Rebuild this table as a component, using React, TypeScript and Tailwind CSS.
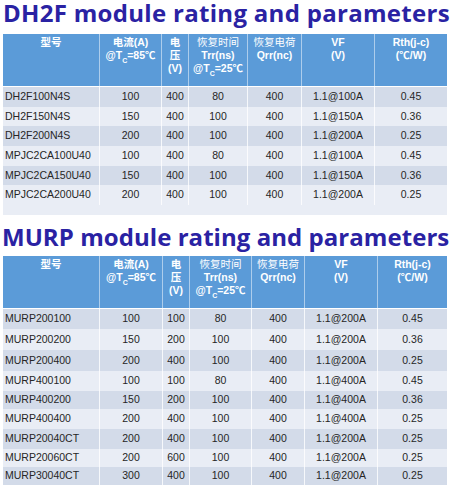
import React from "react";

type Row = { cells: string[]; h: string };

const t1Rows: Row[] = [
  { cells: ["DH2F100N4S", "100", "400", "80", "400", "1.1@100A", "0.45"], h: "h-[20px]" },
  { cells: ["DH2F150N4S", "150", "400", "100", "400", "1.1@150A", "0.36"], h: "h-[19px]" },
  { cells: ["DH2F200N4S", "200", "400", "100", "400", "1.1@200A", "0.25"], h: "h-[20px]" },
  { cells: ["MPJC2CA100U40", "100", "400", "80", "400", "1.1@100A", "0.45"], h: "h-[20px]" },
  { cells: ["MPJC2CA150U40", "150", "400", "100", "400", "1.1@150A", "0.36"], h: "h-[19px]" },
  { cells: ["MPJC2CA200U40", "200", "400", "100", "400", "1.1@200A", "0.25"], h: "h-[30px] pb-[10px]" },
];

const t2Rows: Row[] = [
  { cells: ["MURP200100", "100", "100", "80", "400", "1.1@200A", "0.45"], h: "h-[20px]" },
  { cells: ["MURP200200", "150", "200", "100", "400", "1.1@200A", "0.36"], h: "h-[21px]" },
  { cells: ["MURP200400", "200", "400", "100", "400", "1.1@200A", "0.25"], h: "h-[21px]" },
  { cells: ["MURP400100", "100", "100", "80", "400", "1.1@400A", "0.45"], h: "h-[20px]" },
  { cells: ["MURP400200", "150", "200", "100", "400", "1.1@400A", "0.36"], h: "h-[18px]" },
  { cells: ["MURP400400", "200", "400", "100", "400", "1.1@400A", "0.25"], h: "h-[20px]" },
  { cells: ["MURP20040CT", "200", "400", "100", "400", "1.1@200A", "0.25"], h: "h-[20px]" },
  { cells: ["MURP20060CT", "200", "600", "100", "400", "1.1@200A", "0.25"], h: "h-[18px]" },
  { cells: ["MURP30040CT", "300", "400", "100", "400", "1.1@200A", "0.25"], h: "h-[18px]" },
];

function Tc({ v }: { v: string }) {
  return (
    <span>
      @T<sub className="text-[7px] align-[-2px]">C</sub>={v}℃
    </span>
  );
}

function Header({ cols }: { cols: string }) {
  const cell = "flex flex-col items-center pt-[2px] border-r border-white/50";
  return (
    <div
      className={`grid ${cols} h-[53px] bg-[#5b9bd8] text-white font-bold text-[10.5px] leading-[13px] border-b border-white`}
      style={{ fontFamily: '"Liberation Sans", "Noto Sans CJK SC", sans-serif' }}
    >
      <div className={cell}>型号</div>
      <div className={cell}>
        <span>电流(A)</span>
        <Tc v="85" />
      </div>
      <div className={cell}>
        <span>电</span>
        <span>压</span>
        <span>(V)</span>
      </div>
      <div className={cell}>
        <span className="font-normal">恢复时间</span>
        <span>Trr(ns)</span>
        <Tc v="25" />
      </div>
      <div className={cell}>
        <span className="font-normal">恢复电荷</span>
        <span>Qrr(nc)</span>
      </div>
      <div className={cell}>
        <span>VF</span>
        <span>(V)</span>
      </div>
      <div className="flex flex-col items-center pt-[2px]">
        <span>Rth(j-c)</span>
        <span>(℃/W)</span>
      </div>
    </div>
  );
}

function Table({ cols, rows }: { cols: string; rows: Row[] }) {
  return (
    <div className="ml-[3px] w-[444px]">
      <Header cols={cols} />
      {rows.map((r, i) => (
        <div
          key={i}
          className={`grid ${cols} ${r.h} ${i % 2 === 0 ? "bg-[#d3dbe9]" : "bg-[#e9edf5]"} text-[10.5px] text-[#262626]`}
          style={{ fontFamily: '"Liberation Sans", Arial, sans-serif' }}
        >
          {r.cells.map((c, j) => (
            <div
              key={j}
              className={`flex items-center ${j === 0 ? "justify-start pl-[2px]" : "justify-center"} ${j < 6 ? "border-r border-white/80" : ""}`}
            >
              {c}
            </div>
          ))}
        </div>
      ))}
    </div>
  );
}

export default function App() {
  const titleFont = { fontFamily: '"Open Sans", "Noto Sans", sans-serif' };
  return (
    <div className="w-[454px] h-[488px] bg-white overflow-hidden">
      <div
        className="h-[34px] pl-[3px] text-[24px] leading-[26px] font-bold text-[#2a22a3] whitespace-nowrap tracking-[0.3px]"
        style={titleFont}
      >
        DH2F module rating and parameters
      </div>
      <Table cols="grid-cols-[97px_62px_27px_59px_54px_73px_72px]" rows={t1Rows} />
      <div
        className="mt-[9px] mb-[6px] pl-[2px] text-[24px] leading-[26px] font-bold text-[#2a22a3] whitespace-nowrap tracking-[0.05px]"
        style={titleFont}
      >
        MURP module rating and parameters
      </div>
      <Table cols="grid-cols-[97px_63px_27px_62px_53px_73px_69px]" rows={t2Rows} />
    </div>
  );
}
